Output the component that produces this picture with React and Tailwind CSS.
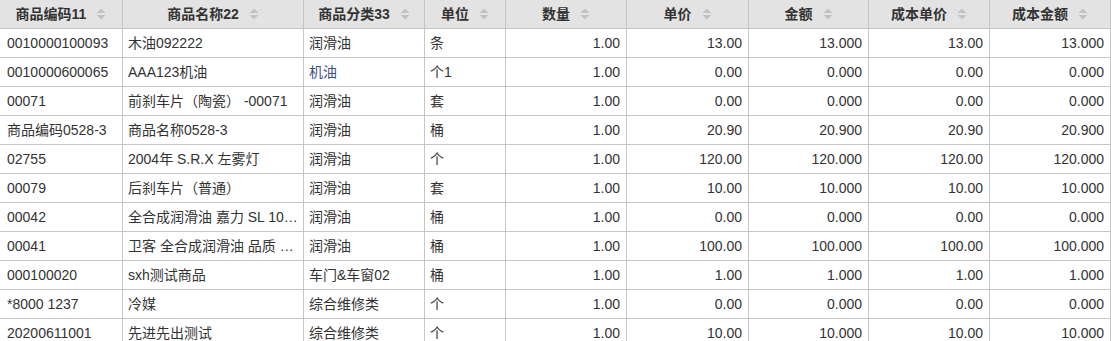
import React from 'react';

const columns = [
    { key: 'code', title: '商品编码11', width: 'w-[123px]', align: 'left' },
    { key: 'name', title: '商品名称22', width: 'w-[181px]', align: 'left' },
    { key: 'category', title: '商品分类33', width: 'w-[121px]', align: 'left' },
    { key: 'unit', title: '单位', width: 'w-[81px]', align: 'left' },
    { key: 'qty', title: '数量', width: 'w-[121px]', align: 'right' },
    { key: 'price', title: '单价', width: 'w-[122px]', align: 'right' },
    { key: 'amount', title: '金额', width: 'w-[120px]', align: 'right' },
    { key: 'costPrice', title: '成本单价', width: 'w-[121px]', align: 'right' },
    { key: 'costAmount', title: '成本金额', width: 'w-[121px]', align: 'right' },
];

const rows = [
    ['0010000100093', '木油092222', '润滑油', '条', '1.00', '13.00', '13.000', '13.00', '13.000'],
    ['0010000600065', 'AAA123机油', '机油', '个1', '1.00', '0.00', '0.000', '0.00', '0.000'],
    ['00071', '前刹车片（陶瓷） -00071', '润滑油', '套', '1.00', '0.00', '0.000', '0.00', '0.000'],
    ['商品编码0528-3', '商品名称0528-3', '润滑油', '桶', '1.00', '20.90', '20.900', '20.90', '20.900'],
    ['02755', '2004年 S.R.X 左雾灯', '润滑油', '个', '1.00', '120.00', '120.000', '120.00', '120.000'],
    ['00079', '后刹车片（普通）', '润滑油', '套', '1.00', '10.00', '10.000', '10.00', '10.000'],
    ['00042', '全合成润滑油 嘉力 SL 10W-40 4L', '润滑油', '桶', '1.00', '0.00', '0.000', '0.00', '0.000'],
    ['00041', '卫客 全合成润滑油 品质 优选 5W-30', '润滑油', '桶', '1.00', '100.00', '100.000', '100.00', '100.000'],
    ['000100020', 'sxh测试商品', '车门&车窗02', '桶', '1.00', '1.00', '1.000', '1.00', '1.000'],
    ['*8000 1237', '冷媒', '综合维修类', '个', '1.00', '0.00', '0.000', '0.00', '0.000'],
    ['20200611001', '先进先出测试', '综合维修类', '个', '1.00', '10.00', '10.000', '10.00', '10.000'],
];

function SortIcon() {
    return (
        <svg width="10" height="12" viewBox="0 0 10 12" className="ml-[10px] shrink-0">
            <path d="M0.5 5 L5 0.5 L9.5 5 Z" fill="#c2c2c2" />
            <path d="M0.5 7 L5 11.5 L9.5 7 Z" fill="#c2c2c2" />
        </svg>
    );
}

export default function App() {
    return (
        <div className="w-[1111px] bg-white text-[14px] text-[#333]" style={{ fontFamily: '"Liberation Sans", Arial, "Noto Sans CJK SC", sans-serif' }}>
            <div className="flex">
                {columns.map((col) => (
                    <div key={col.key} className={`${col.width} shrink-0 h-[29px] flex items-center justify-center bg-[#e3e3e3] border-r border-b border-[#c6c6c6] font-bold`}>
                        <span>{col.title}</span>
                        <SortIcon />
                    </div>
                ))}
            </div>
            {rows.map((row, i) => (
                <div key={i} className="flex">
                    {row.map((val, j) => {
                        const col = columns[j];
                        const isBlue = j === 2 && val === '机油';
                        return (
                            <div
                                key={j}
                                className={`${col.width} shrink-0 h-[29px] flex items-center border-r border-b border-[#c6c6c6] ${col.align === 'right' ? 'justify-end pr-[6px]' : j === 0 ? 'pl-[7px] pr-[4px]' : 'pl-[5px] pr-[3px]'}`}
                            >
                                <span className={`truncate ${isBlue ? 'text-[#3b5180]' : ''}`}>{val}</span>
                            </div>
                        );
                    })}
                </div>
            ))}
        </div>
    );
}
